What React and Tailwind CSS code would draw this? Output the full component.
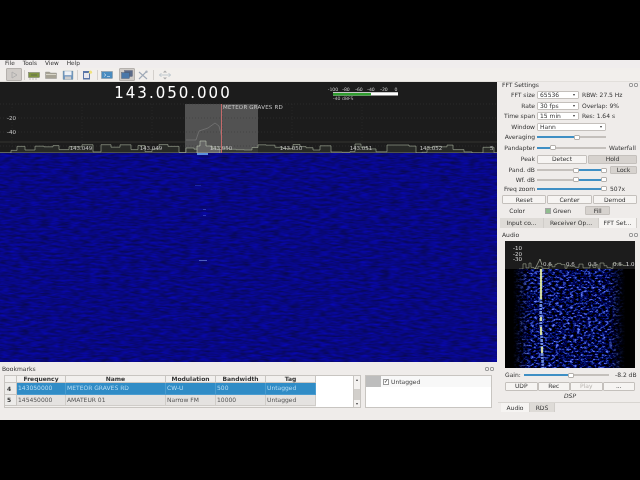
import React from "react";

const font = { fontFamily: '"DejaVu Sans", sans-serif' };

function rng(seed) {
  let s = seed;
  return () => {
    s = (s * 16807) % 2147483647;
    return s / 2147483647;
  };
}

function stepLine(width, base, amp, seed, step) {
  const r = rng(seed);
  let d = `M0 ${base}`;
  let y = base;
  for (let x = 0; x < width; x += step + Math.floor(r() * step * 1.5)) {
    y = base - r() * amp;
    d += ` H${x} V${y.toFixed(1)}`;
  }
  return d + ` H${width}`;
}

function Handle() {
  return <div className="w-[6px] h-[5px] bg-white border border-[#b4b0ac] rounded-[1px] shrink-0" />;
}

function Slider({ pct, w = "w-[69px]" }) {
  return (
    <div className={`flex items-center h-[5px] ${w}`}>
      <div className="h-[2px] bg-[#3f8fc4]" style={{ width: `${pct}%` }} />
      <Handle />
      <div className="h-[2px] flex-1 bg-[#c4c0bc]" />
    </div>
  );
}

function RangeSlider({ pct, w = "w-[70px]" }) {
  return (
    <div className={`flex items-center h-[5px] ${w}`}>
      <div className="h-[2px] bg-[#c4c0bc]" style={{ width: `${pct}%` }} />
      <Handle />
      <div className="h-[2px] flex-1 bg-[#3f8fc4]" />
      <Handle />
    </div>
  );
}

function Btn({ children, className = "", dim = false, on = false }) {
  return (
    <div
      className={`h-[9px] flex items-center justify-center border border-[#c4c0bc] rounded-[1px] text-[6px] leading-none ${
        on ? "bg-[#d6d2ce]" : "bg-[#f6f4f2]"
      } ${dim ? "text-[#b8b4b0]" : "text-[#333]"} ${className}`}
    >
      {children}
    </div>
  );
}

function Combo({ value, w }) {
  return (
    <div className={`h-[8px] ${w} flex items-center justify-between bg-white border border-[#c4c0bc] rounded-[1px] px-[2px] text-[6px] leading-none text-[#333]`}>
      <span>{value}</span>
      <span className="text-[4px] mr-[1px]">▾</span>
    </div>
  );
}

function Label({ children, w = "w-[37px]" }) {
  return <div className={`${w} text-right text-[6px] leading-none text-[#333] shrink-0`}>{children}</div>;
}

function Row({ label, children, className = "" }) {
  return (
    <div className={`flex items-center h-[8px] gap-[2px] ${className}`}>
      <Label>{label}</Label>
      {children}
    </div>
  );
}

function FloatBtns() {
  return (
    <div className="flex gap-[1px]">
      <div className="w-[4px] h-[4px] border border-[#999] rounded-[1px]" />
      <div className="w-[4px] h-[4px] border border-[#999] rounded-[1px]" />
    </div>
  );
}

function Noise({ id, seed, freq, matrix, octaves = "2" }) {
  return (
    <svg className="absolute inset-0 w-full h-full" preserveAspectRatio="none">
      <defs>
        <filter id={id} x="0" y="0" width="100%" height="100%" colorInterpolationFilters="sRGB">
          <feTurbulence type="fractalNoise" baseFrequency={freq} numOctaves={octaves} seed={seed} />
          <feColorMatrix type="matrix" values={matrix} />
        </filter>
      </defs>
      <rect width="100%" height="100%" fill="#000" filter={`url(#${id})`} />
    </svg>
  );
}

function MainPlot() {
  const labels = [
    ["143.049", 81],
    ["143.049", 151],
    ["143.050", 221],
    ["143.050", 291],
    ["143.051", 361],
    ["143.052", 431],
  ];
  return (
    <div className="relative h-[71px] bg-[#1c1c1c] overflow-hidden">
      <svg width="497" height="71" className="absolute inset-0" style={font}>
        <rect x="185" y="22" width="73" height="49" fill="#525252" />
        {[0, 1, 2, 3, 4, 5].map((i) => (
          <line key={i} x1={12 + i * 70} x2={12 + i * 70} y1="22" y2="71" stroke="#333" strokeDasharray="1 2" strokeWidth="0.5" />
        ))}
        {[22, 36, 50, 64].map((y) => (
          <line key={y} x1="0" x2="497" y1={y} y2={y} stroke="#3a3a3a" strokeDasharray="1 2" strokeWidth="0.5" />
        ))}
        <path d="M186 58 L196 58 L199 49 L208 46 L215 41 L219 44 L222 56" fill="none" stroke="#8b8b8b" strokeWidth="0.5" />
        <path d="M0 60 H185 M258 60 H497" stroke="#4d4d45" strokeWidth="0.5" />
        <path d={stepLine(497, 71, 9, 7, 5) + " V71 H0 Z"} fill="#2c2f2b" fillOpacity="0.75" stroke="#a9b39e" strokeWidth="0.6" />
        <path d="M197 71 V64 H200 V59 H206 V64 H212 V67 H220 V71 Z" fill="#666" stroke="#c4cdb8" strokeWidth="0.6" />
        <line x1="221.5" x2="221.5" y1="22" y2="71" stroke="#c46a6a" strokeWidth="1" />
        <text x="223" y="27" fontSize="5.5" fill="#c8c8c8" letterSpacing="0.2">METEOR GRAVES RD</text>
        <text x="7" y="38" fontSize="5.5" fill="#c8c8c8">-20</text>
        <text x="7" y="52" fontSize="5.5" fill="#c8c8c8">-40</text>
        {labels.map(([t, x]) => (
          <text key={x} x={x} y="68" fontSize="5.5" fill="#c2c2c2" textAnchor="middle">{t}</text>
        ))}
        <text x="490" y="68" fontSize="5.5" fill="#c2c2c2">5</text>
        <text x="173" y="16" fontSize="15" fill="#ffffff" letterSpacing="2" textAnchor="middle">143.050.000</text>
        {[["-100", 333], ["-80", 346], ["-60", 359], ["-40", 371], ["-20", 384], ["0", 396]].map(([t, x]) => (
          <text key={x} x={x} y="8.5" fontSize="4.6" fill="#c8c8c8" textAnchor="middle">{t}</text>
        ))}
        <rect x="333" y="10" width="65" height="1" fill="#c8c8c8" />
        <rect x="333" y="11" width="65" height="2.5" fill="#ffffff" />
        <rect x="333" y="11" width="38" height="2.5" fill="#2f9e2f" />
        <text x="333" y="18" fontSize="4.6" fill="#b5b5b5">-40 dBFS</text>
      </svg>
    </div>
  );
}

function Waterfall() {
  return (
    <div className="relative h-[209px] bg-[#07076f] overflow-hidden">
      <Noise
        id="wf"
        seed="3"
        freq="0.1 0.45"
        matrix="0 0 0 0 0.03  0 0 0 0 0.03  0.5 0 0 0 0.26  0 0 0 0 1"
      />
      <svg width="497" height="209" className="absolute inset-0">
        <rect x="197" y="0" width="11" height="2" fill="#5a8fe0" />
        <rect x="195" y="32" width="6" height="1" fill="#1c28a8" />
        <rect x="203" y="56" width="3" height="1" fill="#2a38b8" />
        <rect x="203" y="62" width="3" height="1" fill="#2a38b8" />
        <rect x="199" y="107" width="8" height="1" fill="#4a5cc0" />
      </svg>
    </div>
  );
}

function AudioPlot() {
  return (
    <div className="relative w-[130px] h-[127px] bg-[#000] overflow-hidden">
      <div className="relative h-[28px] bg-[#1c1c1c]">
        <svg width="130" height="28" className="absolute inset-0" style={font}>
          <text x="8" y="9" fontSize="5.5" fill="#ddd">-10</text>
          <text x="8" y="14.5" fontSize="5.5" fill="#ddd">-20</text>
          <text x="8" y="20" fontSize="5.5" fill="#ddd">-30</text>
          {[["0.6", 38], ["0.6", 61], ["0.8", 83], ["0.8", 108]].map(([t, x], i) => (
            <text key={i} x={x} y="25" fontSize="5.5" fill="#c8c8c8">{t}</text>
          ))}
          <text x="129.5" y="25" fontSize="5.5" fill="#ddd" textAnchor="end">1.0</text>
          <path d={stepLine(107, 28, 6, 21, 2)} transform="translate(14 0)" fill="none" stroke="#b8c2a8" strokeWidth="0.5" />
          <path d="M30 28 L35 18 L37 24" fill="none" stroke="#d5dcc8" strokeWidth="0.6" />
        </svg>
      </div>
      <div className="relative h-[99px] bg-black overflow-hidden">
        <div className="absolute top-0 bottom-0 left-[8px] right-[10px] overflow-hidden">
          <Noise
            id="af"
            seed="9"
            freq="0.28 0.5"
            matrix="1.6 0 0 0 -0.88  1.6 0 0 0 -0.8  2.2 0 0 0 -0.78  0 0 0 0 1"
          />
          <div className="absolute inset-y-0 left-0 w-[18px] bg-gradient-to-r from-black to-transparent" />
          <div className="absolute inset-y-0 right-0 w-[18px] bg-gradient-to-l from-black to-transparent" />
        </div>
        <svg width="130" height="99" className="absolute inset-0">
          <path d="M36 0 C36.5 25 35 50 36 60 C37 75 37 85 38 99" fill="none" stroke="#6f8ce0" strokeWidth="2.6" strokeDasharray="3 1 2 1" />
          <path d="M36 0 V30 M36 48 V52 M36 58 V66 M37 78 V84" stroke="#dfe8a0" strokeWidth="1.8" />
        </svg>
      </div>
    </div>
  );
}

function Icon({ children, pressed = false, className = "" }) {
  return (
    <div className={`w-[16px] h-[13px] flex items-center justify-center rounded-[1px] shrink-0 ${pressed ? "bg-[#cfcbc7] border border-[#b5b1ad]" : ""} ${className}`}>
      <svg width="12" height="10" viewBox="0 0 12 10">{children}</svg>
    </div>
  );
}

function Sep({ className = "" }) {
  return <div className={`w-[1px] h-[10px] bg-[#d4d0cc] shrink-0 ${className}`} />;
}

function Toolbar() {
  return (
    <div className="h-[14px] flex items-center pl-[6px] bg-[#f2efec] border-b border-[#e2dfdb]">
      <Icon pressed><path d="M4 2 L9 5 L4 8 Z" fill="none" stroke="#aaa" strokeWidth="0.8" /></Icon>
      <Sep className="mx-[1.5px]" />
      <Icon>
        <rect x="0.5" y="2.5" width="11" height="5" fill="#7f9440" stroke="#666" strokeWidth="0.4" />
        <path d="M2 8.5 V9.5 M5 8.5 V9.5 M8 8.5 V9.5 M3 5 H9" stroke="#555" strokeWidth="0.6" />
      </Icon>
      <Icon className="ml-[1px]">
        <path d="M0.5 2 H4.5 L5.5 3 H11.5 V8.5 H0.5 Z" fill="#a7a395" stroke="#888" strokeWidth="0.4" />
        <rect x="1" y="4" width="10" height="1" fill="#d8d5c8" />
      </Icon>
      <Icon className="ml-[1px]">
        <rect x="1" y="1" width="10" height="8.5" fill="#7498c0" stroke="#688" strokeWidth="0.3" />
        <rect x="2.5" y="1.2" width="7" height="4" fill="#eef1f4" />
        <rect x="3" y="6.5" width="6" height="3" fill="#ccc" />
      </Icon>
      <Sep className="mx-[1px]" />
      <Icon>
        <rect x="2" y="1" width="7" height="8.5" fill="#5a76a8" />
        <rect x="3" y="3" width="5" height="5" fill="#e8e8ee" />
        <circle cx="9.5" cy="2.2" r="1.6" fill="#f0e27a" />
      </Icon>
      <Sep className="mx-[1.5px]" />
      <Icon>
        <rect x="0.5" y="1.5" width="11" height="7" fill="#4a8cc0" stroke="#888" strokeWidth="0.4" />
        <path d="M3 3.5 L5 5 L3 6.5 M6 6.5 H9" stroke="#e8f0f8" strokeWidth="0.6" fill="none" />
      </Icon>
      <Icon pressed className="ml-[4px]">
        <rect x="3.5" y="0.5" width="8" height="6" fill="#5a6a88" stroke="#556" strokeWidth="0.3" />
        <rect x="0.5" y="2.5" width="8" height="6" fill="#4a78aa" stroke="#445" strokeWidth="0.3" />
      </Icon>
      <Icon>
        <path d="M2 9 L9 2 M2 2 L10 9" stroke="#a0aab8" strokeWidth="1.1" />
        <circle cx="9.5" cy="1.8" r="1.2" fill="#aab2bc" />
      </Icon>
      <Sep className="mx-[2px]" />
      <Icon className="ml-[1px]">
        <path d="M6 0.5 L8 2.5 H4 Z M6 9.5 L8 7.5 H4 Z" fill="#aaa" />
        <path d="M0.5 5 H11.5 M2.5 3 L0.5 5 L2.5 7 M9.5 3 L11.5 5 L9.5 7" fill="none" stroke="#a0aebc" strokeWidth="0.6" />
      </Icon>
    </div>
  );
}

const columns = [
  ["Frequency", "w-[49px]"],
  ["Name", "w-[100px]"],
  ["Modulation", "w-[50px]"],
  ["Bandwidth", "w-[50px]"],
  ["Tag", "w-[50px]"],
];

function TableRow({ num, cells, selected }) {
  return (
    <div className="flex h-[11.5px] shrink-0">
      <div className="w-[12px] flex items-center pl-[2px] bg-[#ecebe9] border-r border-b border-[#c8c5c1] text-[6px] font-bold text-[#333]">{num}</div>
      {cells.map((c, i) => (
        <div
          key={i}
          className={`${columns[i][1]} flex items-center pl-[1px] border-r border-b text-[6px] leading-none truncate ${
            selected ? "bg-[#308cc6] text-[#b4dcf4] border-[#4a9ccf]" : "bg-[#e4e2e0] text-[#555] border-[#cfccc8]"
          }`}
        >
          {c}
        </div>
      ))}
    </div>
  );
}

function Bookmarks() {
  return (
    <div className="flex-1 flex flex-col min-h-0">
      <div className="h-[13px] flex items-center justify-between pl-[2px] pr-[3px]">
        <span className="text-[6px] leading-none text-[#333]">Bookmarks</span>
        <FloatBtns />
      </div>
      <div className="flex pl-[4px] pr-[5px] h-[33px] gap-[4px]">
        <div className="flex w-[357px] bg-white border border-[#c8c5c1] overflow-hidden">
          <div className="flex-1 flex flex-col overflow-hidden">
            <div className="flex h-[7px] shrink-0 bg-[#f2f0ee] w-[311px]">
              <div className="w-[12px] border-r border-b border-[#c8c5c1]" />
              {columns.map(([t, w]) => (
                <div key={t} className={`${w} flex items-center justify-center border-r border-b border-[#c8c5c1] text-[6px] font-bold leading-none text-[#333]`}>
                  {t}
                </div>
              ))}
            </div>
            <div className="flex flex-col w-[311px]">
              <TableRow num="4" selected cells={["143050000", "METEOR GRAVES RD", "CW-U", "500", "Untagged"]} />
              <TableRow num="5" cells={["145450000", "AMATEUR 01", "Narrow FM", "10000", "Untagged"]} />
              <div className="flex h-[3px] bg-[#f2f0ee]" />
            </div>
          </div>
          <div className="w-[7px] flex flex-col bg-[#f4f2f0] border-l border-[#c8c5c1]">
            <div className="h-[7px] flex items-center justify-center text-[4px] leading-none text-[#444]">▴</div>
            <div className="flex-1 flex flex-col justify-end">
              <div className="h-[11px] bg-[#d2cfcb]" />
            </div>
            <div className="h-[7px] flex items-center justify-center text-[4px] leading-none text-[#444]">▾</div>
          </div>
        </div>
        <div className="w-[127px] bg-white border border-[#c8c5c1] flex items-start">
          <div className="flex items-center w-full h-[11px] bg-[#f8f8f8]">
            <div className="w-[15px] h-[11px] bg-[#bdbdbd]" />
            <div className="ml-[2px] w-[6px] h-[6px] bg-white border border-[#999] flex items-center justify-center text-[5px] leading-none text-[#111]">✓</div>
            <span className="ml-[2px] text-[6px] leading-none text-[#444]">Untagged</span>
          </div>
        </div>
      </div>
    </div>
  );
}

function Aside({ children }) {
  return <span className="ml-[1px] text-[6px] leading-none text-[#333]">{children}</span>;
}

function FftPanel() {
  return (
    <div className="flex flex-col h-[136px] shrink-0">
      <div className="h-[6px] flex items-center justify-between pl-[4px] pr-[2px]">
        <span className="text-[6px] leading-none text-[#333]">FFT Settings</span>
        <FloatBtns />
      </div>
      <div className="flex flex-col gap-[2.6px] mt-[3px]">
        <Row label="FFT size">
          <Combo value="65536" w="w-[42px]" />
          <Aside>RBW: 27.5 Hz</Aside>
        </Row>
        <Row label="Rate">
          <Combo value="30 fps" w="w-[42px]" />
          <Aside>Overlap: 9%</Aside>
        </Row>
        <Row label="Time span">
          <Combo value="15 min" w="w-[42px]" />
          <Aside>Res: 1.64 s</Aside>
        </Row>
        <Row label="Window">
          <Combo value="Hann" w="w-[69px]" />
        </Row>
        <Row label="Averaging">
          <Slider pct={54} />
        </Row>
        <Row label="Pandapter">
          <Slider pct={19} />
          <Aside>Waterfall</Aside>
        </Row>
      </div>
      <div className="flex items-center mt-[3px]">
        <Label>Peak</Label>
        <Btn className="ml-[2px] w-[50px]">Detect</Btn>
        <Btn on className="ml-[1px] w-[49px]">Hold</Btn>
      </div>
      <Row label="Pand. dB" className="mt-[2.5px]">
        <RangeSlider pct={52} />
        <Btn on className="ml-[1px] w-[27px] !h-[8px]">Lock</Btn>
      </Row>
      <Row label="Wf. dB" className="mt-[1.5px]">
        <RangeSlider pct={52} />
      </Row>
      <Row label="Freq zoom" className="mt-[1px]">
        <Slider pct={92} w="w-[70px]" />
        <Aside>507x</Aside>
      </Row>
      <div className="flex gap-[1px] pl-[4px] pr-[3px] mt-[2.5px]">
        <Btn className="flex-1">Reset</Btn>
        <Btn className="flex-1">Center</Btn>
        <Btn className="flex-1">Demod</Btn>
      </div>
      <div className="flex items-center mt-[2px] h-[9px]">
        <Label w="w-[27px]">Color</Label>
        <div className="ml-[20px] w-[6px] h-[6px] bg-[#8fbc8f] border border-[#a5a5a5]" />
        <span className="ml-[2px] text-[6px] leading-none text-[#333]">Green</span>
        <Btn on className="ml-[14px] w-[25px]">Fill</Btn>
      </div>
    </div>
  );
}

function Tabs({ items, active, className = "", h = "h-[10px]" }) {
  return (
    <div className={`flex ${className}`}>
      {items.map(([t, w], i) => (
        <div
          key={t}
          className={`${w} ${h} flex items-center justify-center text-[6px] leading-none text-[#333] border-r border-[#d0cdc9] ${
            i === active ? "bg-[#f6f4f2]" : "bg-[#dedbd7]"
          }`}
        >
          {t}
        </div>
      ))}
    </div>
  );
}

function AudioPanel() {
  return (
    <div className="flex flex-col flex-1 min-h-0">
      <div className="h-[6px] flex items-center justify-between pl-[4px] pr-[2px] mt-[4px]">
        <span className="text-[6px] leading-none text-[#333]">Audio</span>
        <FloatBtns />
      </div>
      <div className="pl-[7px] mt-[3px]">
        <AudioPlot />
      </div>
      <div className="flex items-center mt-[3.5px] pl-[7px] h-[7px]">
        <span className="text-[6px] leading-none text-[#333] w-[19px] shrink-0">Gain:</span>
        <Slider pct={52} w="w-[85px]" />
        <span className="ml-[6px] text-[6px] leading-none text-[#333]">-8.2 dB</span>
      </div>
      <div className="flex pl-[7px] pr-[5px] mt-[3px]">
        <Btn className="flex-1">UDP</Btn>
        <Btn className="flex-1">Rec</Btn>
        <Btn dim className="flex-1">Play</Btn>
        <Btn className="flex-1">...</Btn>
      </div>
      <div className="text-center text-[6px] italic leading-none text-[#333] mt-[2px] pl-[2px]">DSP</div>
      <div className="mt-[3.5px] border-t border-[#d8d5d1]">
        <Tabs className="pl-[3px]" h="h-[9px]" items={[["Audio", "w-[29px]"], ["RDS", "w-[25px]"]]} active={0} />
      </div>
    </div>
  );
}

export default function App() {
  return (
    <div className="w-[640px] h-[480px] bg-black flex flex-col py-[60px] overflow-hidden" style={font}>
      <div className="flex-1 flex flex-col bg-[#efecea] min-h-0 blur-[0.35px]">
        <div className="h-[8px] flex items-center gap-[8px] pl-[5px] bg-[#f0eded] text-[5.8px] leading-none text-[#333]">
          <span>File</span>
          <span>Tools</span>
          <span>View</span>
          <span>Help</span>
        </div>
        <Toolbar />
        <div className="flex-1 flex min-h-0">
          <div className="w-[497px] flex flex-col shrink-0">
            <MainPlot />
            <Waterfall />
            <Bookmarks />
          </div>
          <div className="flex-1 flex flex-col pl-[1px] min-w-0">
            <FftPanel />
            <div className="pl-[2px] pr-[3px]">
              <Tabs items={[["Input co...", "w-[44px]"], ["Receiver Op...", "w-[55px]"], ["FFT Set...", "flex-1"]]} active={2} />
            </div>
            <AudioPanel />
          </div>
        </div>
      </div>
    </div>
  );
}
